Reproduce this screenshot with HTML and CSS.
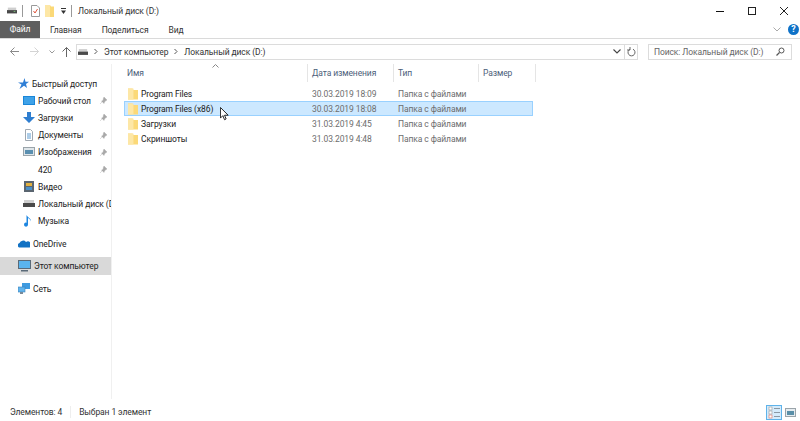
FILE: index.html
```html
<!DOCTYPE html>
<html lang="ru">
<head>
  <meta charset="UTF-8" />
  <title>Локальный диск (D:)</title>
  <link rel="stylesheet" href="styles.css">
</head>
<body>
<div class="window">

  <div class="titlebar">
    <svg class="ico" width="10" height="9" viewBox="0 0 12 9"><rect x="1" y="1" width="10" height="3" fill="#cfcfcf"/><rect x="0" y="4" width="12" height="4" fill="#4a4a4a"/><rect x="8" y="5" width="2" height="1" fill="#7fd07f"/></svg>
    <span class="sep"></span>
    <svg class="ico" width="9" height="12" viewBox="0 0 9 12"><path d="M.5.500h5.500l2.500 2.500v8.500H.5z" fill="#fff" stroke="#9a9a9a"/><path d="M2.500 6l1.500 2 2.500-4" fill="none" stroke="#e0533a"/></svg>
    <svg class="ico folder-big" width="9" height="12" viewBox="0 0 9 12"><path d="M0 0h5l1 1.500h3V12H0z" fill="#fbd978"/><path d="M0 0h5v12H0z" fill="#fde7a6"/></svg>
    <svg class="ico qa" width="5" height="6" viewBox="0 0 5 6"><rect x="0" y="0" width="5" height="1" fill="#333"/><path d="M0 2.500h5L2.500 6z" fill="#333"/></svg>
    <span class="sep last"></span>
    <span class="title">Локальный диск (D:)</span>
    <div class="win-btns">
      <svg width="10" height="10" viewBox="0 0 10 10"><rect x="1" y="5" width="8" height="1" fill="#111"/></svg>
      <svg width="10" height="10" viewBox="0 0 10 10"><rect x="1.500" y="1.500" width="7" height="7" fill="none" stroke="#222"/></svg>
      <svg width="10" height="10" viewBox="0 0 10 10"><path d="M1 1l8 8M9 1l-8 8" stroke="#222" fill="none"/></svg>
    </div>
  </div>

  <div class="tabs">
    <span class="tab-file">Файл</span>
    <span class="tab">Главная</span>
    <span class="tab">Поделиться</span>
    <span class="tab">Вид</span>
    <div class="tabs-right">
      <svg width="8" height="5" viewBox="0 0 8 5"><path d="M.5.500L4 4 7.500.500" fill="none" stroke="#aaa"/></svg>
      <span class="help">?</span>
    </div>
  </div>

  <div class="addressrow">
    <div class="navbtns">
      <svg class="nb-back" width="9" height="9" viewBox="0 0 9 9"><path d="M4.500.500l-4 4 4 4M.5 4.500H9" fill="none" stroke="#8a8a8a"/></svg>
      <svg class="nb-fwd" width="9" height="9" viewBox="0 0 9 9"><path d="M4.500.500l4 4-4 4M8.500 4.500H0" fill="none" stroke="#d4d4d4"/></svg>
      <svg class="nb-down" width="6" height="4" viewBox="0 0 6 4"><path d="M.5.500L3 3 5.500.500" fill="none" stroke="#999"/></svg>
      <svg class="nb-up" width="9" height="10" viewBox="0 0 9 10"><path d="M.5 4.500l4-4 4 4M4.500.5V10" fill="none" stroke="#666"/></svg>
    </div>
    <div class="addressbar">
      <svg width="10" height="8" viewBox="0 0 12 9"><rect x="1" y="1" width="10" height="3" fill="#cfcfcf"/><rect x="0" y="4" width="12" height="4" fill="#4a4a4a"/></svg>
      <svg class="crumb-arrow" width="4" height="7" viewBox="0 0 4 7"><path d="M.5 1l2.500 2.500L.5 6" fill="none" stroke="#555"/></svg>
      <span>Этот компьютер</span>
      <svg class="crumb-arrow" width="4" height="7" viewBox="0 0 4 7"><path d="M.5 1l2.500 2.500L.5 6" fill="none" stroke="#555"/></svg>
      <span>Локальный диск (D:)</span>
      <svg class="addr-down" width="8" height="5" viewBox="0 0 8 5"><path d="M.5.500L4 4 7.500.500" fill="none" stroke="#444" stroke-width="1.100"/></svg>
      <span class="addr-refresh">
        <svg width="9" height="10" viewBox="0 0 9 10"><path d="M3 2.200a3.500 3.500 0 1 0 3 0M3 0v3H0" fill="none" stroke="#666"/></svg>
      </span>
    </div>
    <div class="search">
      <span>Поиск: Локальный диск (D:)</span>
      <svg width="9" height="9" viewBox="0 0 9 9"><circle cx="5.500" cy="3.500" r="2.500" fill="none" stroke="#555"/><path d="M3.500 5.500L.5 8.500" stroke="#555" stroke-width="1.300"/></svg>
    </div>
  </div>

  <div class="body">
    <nav class="sidebar">
      <div class="nav-item top">
        <svg width="11" height="11" viewBox="0 0 11 11"><path d="M6.500 0l1 3.800H11L8 6l1 4-3-2.200L1.500 11 3.500 6.500 0 4.500h5z" fill="#2f7fd6"/></svg>
        <span>Быстрый доступ</span>
      </div>
      <div class="nav-item sub">
        <svg width="12" height="10" viewBox="0 0 12 10"><rect width="12" height="9" fill="#1a86d8"/><rect x="1" y="1" width="10" height="7" fill="#3fa2e8"/></svg>
        <span>Рабочий стол</span>
        <svg class="pin" width="7" height="7" viewBox="0 0 7 7"><path d="M4 0l3 3-1 .5-1.500 1.500-.5 1.500L1.500 4 3 3.500 3.500 1zM2.500 4.500L0 7" fill="#a8a8a8" stroke="#a8a8a8" stroke-width=".4"/></svg>
      </div>
      <div class="nav-item sub">
        <svg width="12" height="11" viewBox="0 0 12 11"><path d="M4 0h4v5h4l-6 6-6-6h4z" fill="#2e7ed0"/></svg>
        <span>Загрузки</span>
        <svg class="pin" width="7" height="7" viewBox="0 0 7 7"><path d="M4 0l3 3-1 .5-1.500 1.500-.5 1.500L1.500 4 3 3.500 3.500 1zM2.500 4.500L0 7" fill="#a8a8a8" stroke="#a8a8a8" stroke-width=".4"/></svg>
      </div>
      <div class="nav-item sub">
        <svg width="12" height="12" viewBox="0 0 12 12"><path d="M2.500.5h5l2 2v9h-7z" fill="#fff" stroke="#a0a8b0"/><path d="M4 5h4M4 7h4M4 9h4" stroke="#5a9ad0"/></svg>
        <span>Документы</span>
        <svg class="pin" width="7" height="7" viewBox="0 0 7 7"><path d="M4 0l3 3-1 .5-1.500 1.500-.5 1.500L1.500 4 3 3.500 3.500 1zM2.500 4.500L0 7" fill="#a8a8a8" stroke="#a8a8a8" stroke-width=".4"/></svg>
      </div>
      <div class="nav-item sub">
        <svg width="12" height="10" viewBox="0 0 12 10"><rect x=".5" y=".5" width="11" height="8" fill="#dfe6ea" stroke="#9aa4aa"/><rect x="2" y="3" width="8" height="4" fill="#5a8fb0"/></svg>
        <span>Изображения</span>
        <svg class="pin" width="7" height="7" viewBox="0 0 7 7"><path d="M4 0l3 3-1 .5-1.500 1.500-.5 1.500L1.500 4 3 3.500 3.500 1zM2.500 4.500L0 7" fill="#a8a8a8" stroke="#a8a8a8" stroke-width=".4"/></svg>
      </div>
      <div class="nav-item sub">
        <svg width="12" height="10" viewBox="0 0 12 10"></svg>
        <span>420</span>
        <svg class="pin" width="7" height="7" viewBox="0 0 7 7"><path d="M4 0l3 3-1 .5-1.500 1.500-.5 1.500L1.500 4 3 3.500 3.500 1zM2.500 4.500L0 7" fill="#a8a8a8" stroke="#a8a8a8" stroke-width=".4"/></svg>
      </div>
      <div class="nav-item sub">
        <svg width="12" height="11" viewBox="0 0 12 11"><rect x="1" y="0" width="10" height="11" fill="#5a6570"/><rect x="3" y="2" width="6" height="3" fill="#e0b040"/><rect x="3" y="6" width="6" height="3" fill="#4a90c8"/></svg>
        <span>Видео</span>
      </div>
      <div class="nav-item sub">
        <svg width="12" height="9" viewBox="0 0 12 9"><rect x="1" y="1" width="10" height="3" fill="#cfcfcf"/><rect x="0" y="4" width="12" height="4" fill="#4a4a4a"/></svg>
        <span>Локальный диск (D:)</span>
      </div>
      <div class="nav-item sub">
        <svg width="12" height="13" viewBox="0 0 12 13"><path d="M5 1v8.500a2 2 0 1 1-1.500-1.800V0c1 2.500 4.500 3 4.500 6.500C7.500 4.500 6 3.500 5 3z" fill="#1e86e0"/></svg>
        <span>Музыка</span>
      </div>
      <div class="nav-item top gap">
        <svg width="12" height="9" viewBox="0 0 12 9"><path d="M1 8.500a2.500 2.500 0 0 1 .5-4.500A3.800 3.800 0 0 1 8 3a2.800 2.800 0 0 1 3.500 5.500z" fill="#1272c4"/></svg>
        <span>OneDrive</span>
      </div>
      <div class="nav-item top gap selected">
        <svg width="13" height="12" viewBox="0 0 13 12"><rect x=".5" y=".5" width="12" height="8" fill="#5ab4ee" stroke="#5a6a78"/><rect x="3" y="10" width="7" height="1.500" fill="#5a6a78"/></svg>
        <span>Этот компьютер</span>
      </div>
      <div class="nav-item top gap">
        <svg width="12" height="11" viewBox="0 0 12 11"><rect x="4" y="0" width="8" height="6" fill="#3f9be0"/><rect x="0" y="4" width="7" height="5" fill="#62b4ec" stroke="#3a7fb8" stroke-width=".6"/><rect x="2" y="9" width="3" height="2" fill="#7a8a98"/></svg>
        <span>Сеть</span>
      </div>
    </nav>

    <main class="files">
      <div class="sort-arrow"><svg width="7" height="4" viewBox="0 0 7 4"><path d="M.5 3.500l3-3 3 3" fill="none" stroke="#888"/></svg></div>
      <div class="columns">
        <div class="col col-name">Имя</div>
        <div class="col col-date">Дата изменения</div>
        <div class="col col-type">Тип</div>
        <div class="col col-size">Размер</div>
      </div>
      <div class="rows">
        <div class="row">
          <div class="cell-name"><svg class="folder" width="10" height="12" viewBox="0 0 11 12"><path d="M0 0h5l1 1.500h5V12H0z" fill="#fbd978"/><path d="M0 0h6v12H0z" fill="#fde7a6"/></svg>Program Files</div>
          <div class="cell-date">30.03.2019 18:09</div>
          <div class="cell-type">Папка с файлами</div>
        </div>
        <div class="row active">
          <div class="cell-name"><svg class="folder" width="10" height="12" viewBox="0 0 11 12"><path d="M0 0h5l1 1.500h5V12H0z" fill="#fbd978"/><path d="M0 0h6v12H0z" fill="#fde7a6"/></svg>Program Files (x86)</div>
          <div class="cell-date">30.03.2019 18:08</div>
          <div class="cell-type">Папка с файлами</div>
          <svg class="cursor" width="9" height="14" viewBox="0 0 11 17"><path d="M.5.500v13l3-3 2 5 2-1-2-4.500h4.500z" fill="#fff" stroke="#222" stroke-width="1.200"/></svg>
        </div>
        <div class="row">
          <div class="cell-name"><svg class="folder" width="10" height="12" viewBox="0 0 11 12"><path d="M0 0h5l1 1.500h5V12H0z" fill="#fbd978"/><path d="M0 0h6v12H0z" fill="#fde7a6"/></svg>Загрузки</div>
          <div class="cell-date">31.03.2019 4:45</div>
          <div class="cell-type">Папка с файлами</div>
        </div>
        <div class="row">
          <div class="cell-name"><svg class="folder" width="10" height="12" viewBox="0 0 11 12"><path d="M0 0h5l1 1.500h5V12H0z" fill="#fbd978"/><path d="M0 0h6v12H0z" fill="#fde7a6"/></svg>Скриншоты</div>
          <div class="cell-date">31.03.2019 4:48</div>
          <div class="cell-type">Папка с файлами</div>
        </div>
      </div>
    </main>
  </div>

  <div class="statusbar">
    <span>Элементов: 4</span>
    <span class="status-sep"></span>
    <span>Выбран 1 элемент</span>
    <div class="views">
      <span class="view on">
        <svg width="13" height="13" viewBox="0 0 13 13"><rect x="1" y="1" width="3" height="3" fill="#fff" stroke="#999" stroke-width=".6"/><rect x="1" y="5" width="3" height="3" fill="#fff" stroke="#999" stroke-width=".6"/><rect x="1" y="9" width="3" height="3" fill="#fff" stroke="#e07060" stroke-width=".6"/><path d="M6 2.500h6M6 6.500h6M6 10.500h6" stroke="#8a98a4"/></svg>
      </span>
      <span class="view">
        <svg width="11" height="9" viewBox="0 0 11 9"><rect x=".5" y=".5" width="10" height="8" fill="#e6ecf0" stroke="#9aa4aa"/><rect x="2" y="3" width="7" height="4" fill="#5a8fa8"/></svg>
      </span>
    </div>
  </div>

</div>
</body>
</html>
```

FILE: styles.css
```css
html, body {
  margin: 0;
  padding: 0;
  background: white;
  overflow: hidden;
}

.window {
  width: 800px;
  height: 421px;
  display: flex;
  flex-direction: column;
  font-family: Roboto, sans-serif;
  font-size: 8.5px;
  letter-spacing: -0.1px;
  color: #222;
}

svg { flex: none; display: block; }

.titlebar {
  height: 21px;
  display: flex;
  align-items: center;
  padding-left: 7px;
}
.titlebar .ico { margin-right: 5px; }
.titlebar .folder-big { margin-right: 7px; }
.sep {
  width: 1px;
  height: 12px;
  background: #999;
  margin-right: 8px;
}
.sep.last { margin-right: 6px; }
.title { color: #333; }

.win-btns {
  margin-left: auto;
  display: flex;
  gap: 22px;
  padding-right: 11px;
}

.tabs {
  height: 17px;
  display: flex;
  align-items: center;
  border-bottom: 1px solid #dadada;
}
.tab-file {
  width: 40px;
  height: 17px;
  line-height: 17px;
  text-align: center;
  background: #5f5f5f;
  color: white;
}
.tab { margin-left: 10px; margin-right: 10px; color: #333; }
.tabs-right {
  margin-left: auto;
  display: flex;
  align-items: center;
  gap: 7px;
  padding-right: 1px;
}
.help {
  width: 11px;
  height: 11px;
  border-radius: 50%;
  background: #0e72c8;
  color: white;
  font-weight: bold;
  font-size: 9px;
  line-height: 11px;
  text-align: center;
}

.addressrow {
  height: 25px;
  display: flex;
  align-items: center;
}
.navbtns {
  width: 76px;
  box-sizing: border-box;
  padding-left: 10px;
  display: flex;
  align-items: center;
}
.nb-fwd { margin-left: 11px; }
.nb-down { margin-left: 10px; }
.nb-up { margin-left: 7px; }

.addressbar {
  width: 562px;
  height: 16px;
  box-sizing: border-box;
  border: 1px solid #dcdcdc;
  display: flex;
  align-items: center;
  padding-left: 1px;
  color: #333;
}
.crumb-arrow { margin: 0 6px; }
.addr-down { margin-left: auto; margin-right: 3px; }
.addr-refresh {
  width: 12px;
  height: 14px;
  border-left: 1px solid #dcdcdc;
  display: flex;
  align-items: center;
  justify-content: center;
}
.search {
  width: 144px;
  height: 16px;
  box-sizing: border-box;
  margin-left: 10px;
  border: 1px solid #dcdcdc;
  display: flex;
  align-items: center;
  justify-content: space-between;
  padding: 0 6px 0 5px;
  color: #666;
}

.body {
  flex: 1;
  display: flex;
  min-height: 0;
}

.sidebar {
  width: 112px;
  flex: none;
  box-sizing: border-box;
  border-right: 1px solid #f0f0f0;
  padding-top: 11px;
}
.nav-item {
  height: 17.2px;
  display: flex;
  align-items: center;
  white-space: nowrap;
  overflow: hidden;
  position: relative;
}
.nav-item span { margin-left: 3px; }
.nav-item.top { padding-left: 18px; }
.nav-item.sub { padding-left: 23px; }
.nav-item.gap { margin-top: 5.3px; }
.nav-item.selected { background: #d9d9d9; }

.pin {
  position: absolute;
  right: 4px;
  top: 5px;
}

.files {
  flex: 1;
  position: relative;
}
.sort-arrow {
  position: absolute;
  left: 100px;
  top: 0;
}
.columns {
  display: flex;
  height: 22px;
  padding-left: 12px;
  color: #4c607a;
}
.col {
  box-sizing: border-box;
  border-right: 1px solid #e5e5e5;
  padding: 4px 0 0 4px;
  height: 18px;
}
.col-name { width: 184px; padding-left: 3px; }
.col-date { width: 86px; }
.col-type { width: 85px; }
.col-size { width: 57px; }

.rows { margin-left: 12px; width: 409px; }
.row {
  display: flex;
  align-items: center;
  height: 15px;
  box-sizing: border-box;
  color: #6d6d6d;
  position: relative;
}
.row.active {
  background: #cce8ff;
  outline: 1px solid #99d1ff;
  outline-offset: -1px;
}
.cell-name {
  width: 184px;
  display: flex;
  align-items: center;
  color: #222;
  padding-left: 4px;
  box-sizing: border-box;
}
.folder { margin-right: 3px; }
.cell-date { width: 86px; padding-left: 4px; box-sizing: border-box; }
.cell-type { padding-left: 4px; }
.cursor {
  position: absolute;
  left: 96px;
  top: 6px;
}

.statusbar {
  height: 22px;
  box-sizing: border-box;
  display: flex;
  align-items: center;
  padding: 4px 2px 0 10px;
  color: #333;
}
.status-sep {
  width: 1px;
  height: 12px;
  background: #eee;
  margin: 0 8px;
}
.views {
  margin-left: auto;
  display: flex;
  align-items: center;
}
.view {
  width: 16px;
  height: 15px;
  box-sizing: border-box;
  display: flex;
  align-items: center;
  justify-content: center;
}
.view.on {
  background: #d5ebfb;
  border: 1px solid #5fb3ea;
}
```
